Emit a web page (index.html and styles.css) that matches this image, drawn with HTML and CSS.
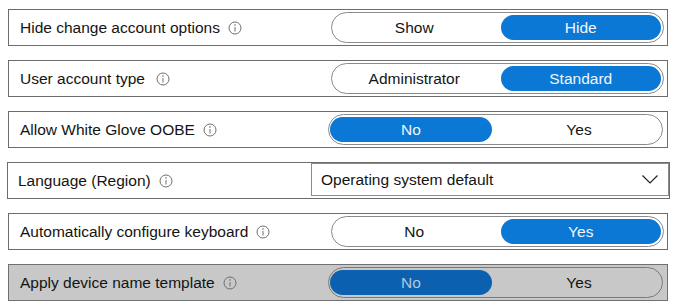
FILE: index.html
```html
<!DOCTYPE html>
<html lang="en">
<head>
    <meta charset="UTF-8">
    <meta name="viewport" content="width=device-width, initial-scale=1.0">
    <title>Deployment settings</title>
    <link rel="stylesheet" href="styles.css">
</head>
<body>
    <div class="settings">
        <div class="row">
            <span class="label">Hide change account options</span>
            <svg class="info" viewBox="0 0 14 14"><circle cx="7" cy="7" r="6"/><line x1="7" y1="6" x2="7" y2="10.5"/><circle class="dot" cx="7" cy="4" r="0.8"/></svg>
            <div class="toggle">
                <span>Show</span>
                <span class="on">Hide</span>
            </div>
        </div>

        <div class="row">
            <span class="label">User account type</span>
            <svg class="info wide" viewBox="0 0 14 14"><circle cx="7" cy="7" r="6"/><line x1="7" y1="6" x2="7" y2="10.5"/><circle class="dot" cx="7" cy="4" r="0.8"/></svg>
            <div class="toggle">
                <span>Administrator</span>
                <span class="on">Standard</span>
            </div>
        </div>

        <div class="row">
            <span class="label">Allow White Glove OOBE</span>
            <svg class="info" viewBox="0 0 14 14"><circle cx="7" cy="7" r="6"/><line x1="7" y1="6" x2="7" y2="10.5"/><circle class="dot" cx="7" cy="4" r="0.8"/></svg>
            <div class="toggle toggle-left">
                <span class="on">No</span>
                <span>Yes</span>
            </div>
        </div>

        <div class="row row-select">
            <span class="label">Language (Region)</span>
            <svg class="info" viewBox="0 0 14 14"><circle cx="7" cy="7" r="6"/><line x1="7" y1="6" x2="7" y2="10.5"/><circle class="dot" cx="7" cy="4" r="0.8"/></svg>
            <div class="dropdown">
                <span>Operating system default</span>
                <svg class="chevron" viewBox="0 0 16 9"><polyline points="0.5,0.5 8,8 15.5,0.5"/></svg>
            </div>
        </div>

        <div class="row">
            <span class="label">Automatically configure keyboard</span>
            <svg class="info" viewBox="0 0 14 14"><circle cx="7" cy="7" r="6"/><line x1="7" y1="6" x2="7" y2="10.5"/><circle class="dot" cx="7" cy="4" r="0.8"/></svg>
            <div class="toggle">
                <span>No</span>
                <span class="on">Yes</span>
            </div>
        </div>

        <div class="row row-disabled">
            <span class="label">Apply device name template</span>
            <svg class="info" viewBox="0 0 14 14"><circle cx="7" cy="7" r="6"/><line x1="7" y1="6" x2="7" y2="10.5"/><circle class="dot" cx="7" cy="4" r="0.8"/></svg>
            <div class="toggle toggle-left">
                <span class="on">No</span>
                <span>Yes</span>
            </div>
        </div>
    </div>
</body>
</html>
```

FILE: styles.css
```css
body {
    margin: 0;
    background: #fff;
    font-family: "Liberation Sans", Arial, sans-serif;
    font-size: 15.5px;
    color: #141414;
}

.settings {
    display: flex;
    flex-direction: column;
    gap: 14px;
    padding: 9px 10px 0 8px;
}

.row {
    display: flex;
    align-items: center;
    box-sizing: border-box;
    height: 37px;
    padding: 0 3px 0 11px;
    border: 1px solid #6c6c6c;
    background: #fff;
}

.label {
    white-space: nowrap;
}

.info {
    width: 14px;
    height: 14px;
    margin-left: 8px;
    fill: none;
    stroke: #6f6f6f;
    stroke-width: 1;
}

.info .dot {
    fill: #6f6f6f;
    stroke: none;
}

.info.wide {
    margin-left: 11px;
}

.toggle {
    display: grid;
    grid-template-columns: 1fr 1fr;
    gap: 6px;
    box-sizing: border-box;
    width: 333px;
    height: 31px;
    padding: 2px;
    margin-left: auto;
    border: 1px solid #8a8a8a;
    border-radius: 16px;
}

.toggle span {
    display: flex;
    align-items: center;
    justify-content: center;
    border-radius: 13px;
}

.toggle .on {
    background: #0a78d4;
    color: #f2f6fb;
}

.toggle-left {
    width: 335px;
    padding-left: 1px;
    margin-right: 1px;
}

.row-select {
    align-items: flex-start;
    margin: 0 -2px 0 -1px;
    padding: 0 0 0 10px;
}

.row-select .label,
.row-select .info {
    align-self: center;
}

.dropdown {
    display: flex;
    align-items: center;
    justify-content: space-between;
    box-sizing: border-box;
    width: 358px;
    height: 33px;
    margin-left: auto;
    padding: 0 10px 0 9px;
    border: 1px solid #8c8c8c;
}

.chevron {
    width: 16px;
    height: 9px;
    fill: none;
    stroke: #222;
    stroke-width: 1.2;
}

.row-disabled {
    background: #c8c8c8;
    border-color: #707070;
}

.row-disabled .toggle {
    border-color: #7a7a7a;
}

.row-disabled .toggle .on {
    background: #0b61b0;
    color: #b3c7dd;
}
```
